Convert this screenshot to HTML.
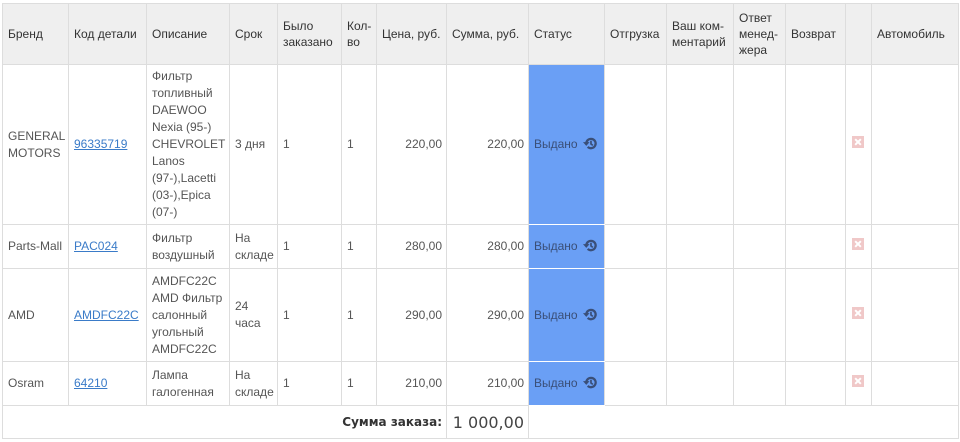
<!DOCTYPE html>
<html><head><meta charset="utf-8"><style>
body{margin:0;background:#fff;width:960px;height:442px;overflow:hidden}
table{position:absolute;left:2px;top:3px;border-collapse:collapse;table-layout:fixed;width:957px;font-family:"Liberation Sans",Arial,sans-serif;font-size:12px;color:#555;line-height:17px}
td,th{border:1px solid #ddd;padding:0 4px 0 5px;vertical-align:middle;text-align:left;overflow:hidden}
th{background:#efefef;font-weight:normal;color:#333;height:60px;line-height:16px}
a{color:#3a7bc8;text-decoration:underline}
.r{text-align:right}
.s{background:#6a9ff5;color:#3a4f78;padding-left:5px;white-space:nowrap;border-color:#fff #ddd}
.ic{display:inline-block;width:15px;height:15px;vertical-align:-3px;margin-left:5px}
.x{display:inline-block;width:12px;height:12px;background:#f0c8c8;position:relative;margin-left:1px}
.x:before,.x:after{content:"";position:absolute;left:5px;top:2px;width:2px;height:8px;background:#fff;transform:rotate(45deg)}
.x:after{transform:rotate(-45deg)}
.tot{font-family:"DejaVu Sans",sans-serif;font-weight:bold;color:#333;font-size:12px;white-space:nowrap}
.big{font-family:"DejaVu Sans",sans-serif;font-size:16px;color:#444;white-space:nowrap;padding:0 4px}
</style></head><body>
<table>
<colgroup><col style="width:66px"><col style="width:78px"><col style="width:83px"><col style="width:48px"><col style="width:64px"><col style="width:35px"><col style="width:70px"><col style="width:82px"><col style="width:76px"><col style="width:62px"><col style="width:67px"><col style="width:52px"><col style="width:60px"><col style="width:26px"><col style="width:87px"></colgroup>
<tr><th>Бренд</th><th>Код детали</th><th>Описание</th><th>Срок</th><th>Было заказано</th><th>Кол-во</th><th>Цена, руб.</th><th>Сумма, руб.</th><th>Статус</th><th>Отгрузка</th><th>Ваш ком-ментарий</th><th>Ответ менед-жера</th><th>Возврат</th><th></th><th>Автомобиль</th></tr>
<tr style="height:160px"><td>GENERAL MOTORS</td><td><a>96335719</a></td><td>Фильтр топливный DAEWOO Nexia (95-) CHEVROLET Lanos (97-),Lacetti (03-),Epica (07-)</td><td>3 дня</td><td>1</td><td>1</td><td class="r">220,00</td><td class="r">220,00</td><td class="s">Выдано<svg class="ic" viewBox="0 0 16 16"><path d="M3.5 8a5 5 0 1 1 1.5 3.6" fill="none" stroke="#3a4f78" stroke-width="2.4"/><path d="M0 6.5h7L3.5 10.5z" fill="#3a4f78"/><path d="M8.5 5v3.5l2 1.5" fill="none" stroke="#3a4f78" stroke-width="1.8"/></svg></td><td></td><td></td><td></td><td></td><td><span class="x"></span></td><td></td></tr>
<tr style="height:44px"><td>Parts-Mall</td><td><a>PAC024</a></td><td>Фильтр воздушный</td><td>На складе</td><td>1</td><td>1</td><td class="r">280,00</td><td class="r">280,00</td><td class="s">Выдано<svg class="ic" viewBox="0 0 16 16"><path d="M3.5 8a5 5 0 1 1 1.5 3.6" fill="none" stroke="#3a4f78" stroke-width="2.4"/><path d="M0 6.5h7L3.5 10.5z" fill="#3a4f78"/><path d="M8.5 5v3.5l2 1.5" fill="none" stroke="#3a4f78" stroke-width="1.8"/></svg></td><td></td><td></td><td></td><td></td><td><span class="x"></span></td><td></td></tr>
<tr style="height:93px"><td>AMD</td><td><a>AMDFC22C</a></td><td>AMDFC22C AMD Фильтр салонный угольный AMDFC22C</td><td>24 часа</td><td>1</td><td>1</td><td class="r">290,00</td><td class="r">290,00</td><td class="s">Выдано<svg class="ic" viewBox="0 0 16 16"><path d="M3.5 8a5 5 0 1 1 1.5 3.6" fill="none" stroke="#3a4f78" stroke-width="2.4"/><path d="M0 6.5h7L3.5 10.5z" fill="#3a4f78"/><path d="M8.5 5v3.5l2 1.5" fill="none" stroke="#3a4f78" stroke-width="1.8"/></svg></td><td></td><td></td><td></td><td></td><td><span class="x"></span></td><td></td></tr>
<tr style="height:44px"><td>Osram</td><td><a>64210</a></td><td>Лампа галогенная</td><td>На складе</td><td>1</td><td>1</td><td class="r">210,00</td><td class="r">210,00</td><td class="s">Выдано<svg class="ic" viewBox="0 0 16 16"><path d="M3.5 8a5 5 0 1 1 1.5 3.6" fill="none" stroke="#3a4f78" stroke-width="2.4"/><path d="M0 6.5h7L3.5 10.5z" fill="#3a4f78"/><path d="M8.5 5v3.5l2 1.5" fill="none" stroke="#3a4f78" stroke-width="1.8"/></svg></td><td></td><td></td><td></td><td></td><td><span class="x"></span></td><td></td></tr>
<tr style="height:33px"><td colspan="7" class="r tot" style="border-right:none">Сумма заказа:</td><td class="r big" style="border-left:1px solid #ddd">1 000,00</td><td colspan="7"></td></tr>
</table>
</body></html>
